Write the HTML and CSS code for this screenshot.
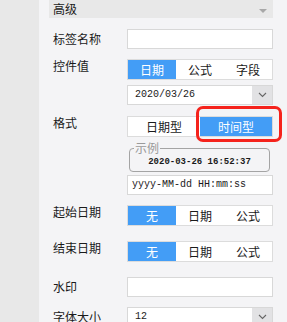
FILE: index.html
```html
<!DOCTYPE html>
<html lang="zh">
<head>
    <meta charset="UTF-8">
    <meta name="viewport" content="width=device-width, initial-scale=1.0">
    <title>控件属性</title>
    <link rel="stylesheet" href="styles.css">
</head>
<body>
    <div class="side"></div>

    <div class="panel">
        <div class="section-head">
            <span>高级</span>
            <span class="caret"></span>
        </div>

        <div class="field gap-11">
            <label class="field-label">标签名称</label>
            <div class="control">
                <input class="text-input" type="text">
            </div>
        </div>

        <div class="field gap-10">
            <label class="field-label top">控件值</label>
            <div class="control">
                <div class="segment">
                    <span class="seg active">日期</span>
                    <span class="seg">公式</span>
                    <span class="seg">字段</span>
                </div>
                <div class="select date-select">
                    <span class="select-value">2020/03/26</span>
                    <span class="select-btn"><svg width="9" height="6" viewBox="0 0 9 6"><path d="M1 1 L4.5 4.5 L8 1" fill="none" stroke="#666" stroke-width="1.1"/></svg></span>
                </div>
            </div>
        </div>

        <div class="field gap-11">
            <label class="field-label top">格式</label>
            <div class="control">
                <div class="segment">
                    <span class="seg">日期型</span>
                    <span class="seg active">时间型<span class="highlight"></span></span>
                </div>
                <fieldset class="sample">
                    <legend>示例</legend>
                    <div class="sample-text">2020-03-26 16:52:37</div>
                </fieldset>
                <div class="format-input">yyyy-MM-dd HH:mm:ss</div>
            </div>
        </div>

        <div class="field gap-10">
            <label class="field-label top">起始日期</label>
            <div class="control">
                <div class="segment">
                    <span class="seg active">无</span>
                    <span class="seg">日期</span>
                    <span class="seg">公式</span>
                </div>
            </div>
        </div>

        <div class="field gap-15">
            <label class="field-label top">结束日期</label>
            <div class="control">
                <div class="segment">
                    <span class="seg active">无</span>
                    <span class="seg">日期</span>
                    <span class="seg">公式</span>
                </div>
            </div>
        </div>

        <div class="field gap-15">
            <label class="field-label">水印</label>
            <div class="control">
                <input class="text-input" type="text">
            </div>
        </div>

        <div class="field gap-10">
            <label class="field-label">字体大小</label>
            <div class="control">
                <div class="select">
                    <span class="select-value">12</span>
                    <span class="select-btn"><svg width="9" height="6" viewBox="0 0 9 6"><path d="M1 1 L4.5 4.5 L8 1" fill="none" stroke="#666" stroke-width="1.1"/></svg></span>
                </div>
            </div>
        </div>
    </div>
</body>
</html>
```

FILE: styles.css
```css
body {
    margin: 0;
    height: 322px;
    overflow: hidden;
    display: flex;
    font-family: "Noto Sans CJK SC", "DejaVu Sans", sans-serif;
    font-size: 12px;
    color: #1a1a1a;
}

.side {
    width: 39px;
    background-color: #e8e8e8;
}

.panel {
    flex: 1;
    background-color: #f4f4f6;
    padding: 0 14px 0 10px;
}

.section-head {
    height: 18px;
    background-color: #e8e8e8;
    display: flex;
    align-items: center;
    justify-content: space-between;
    padding: 0 6px 0 4px;
    line-height: 18px;
}

.caret {
    width: 0;
    height: 0;
    border-left: 4px solid transparent;
    border-right: 4px solid transparent;
    border-top: 4px solid #a8a8a8;
    margin-top: 3px;
}

.field {
    display: flex;
    align-items: flex-start;
}

.gap-10 { margin-top: 10px; }
.gap-11 { margin-top: 11px; }
.gap-15 { margin-top: 15px; }

.field-label {
    width: 74px;
    padding-left: 4px;
    line-height: 20px;
    flex-shrink: 0;
}

.field-label.top {
    line-height: 14px;
}

.control {
    flex: 1;
    display: flex;
    flex-direction: column;
}

.text-input {
    box-sizing: border-box;
    width: 100%;
    height: 20px;
    margin: 0;
    border: 1px solid #d8d8d8;
    background-color: #ffffff;
    outline: none;
}

.segment {
    display: flex;
    height: 21px;
    box-sizing: border-box;
    border: 1px solid #dcdcdc;
    background-color: #ffffff;
}

.seg {
    flex: 1;
    position: relative;
    text-align: center;
    line-height: 19px;
    font-size: 12px;
}

.seg.active {
    background-color: #439df6;
    color: #ffffff;
}

.highlight {
    position: absolute;
    left: -4px;
    top: -11px;
    width: 80px;
    height: 30px;
    border: 3px solid #f5231c;
    border-radius: 7px;
}

.select {
    display: flex;
    height: 20px;
    box-sizing: border-box;
    border: 1px solid #d8d8d8;
    background-color: #ffffff;
}

.date-select {
    margin-top: 5px;
}

.select-value {
    flex: 1;
    padding-left: 7px;
    font-family: "Liberation Mono", monospace;
    font-size: 10px;
    line-height: 18px;
}

.select-btn {
    width: 20px;
    background-color: #e2e2e4;
    display: flex;
    align-items: center;
    justify-content: center;
}

.sample {
    margin: 6px 3px 0 2px;
    padding: 0;
    height: 27px;
    border: 1px solid #a4a4a4;
    border-radius: 4px;
}

.sample legend {
    color: #9a9a9a;
    padding: 0 1px;
    margin-left: 4px;
    line-height: 10px;
}

.sample-text {
    text-align: center;
    font-family: "Liberation Mono", monospace;
    font-size: 9px;
    font-weight: bold;
    line-height: 18px;
}

.format-input {
    margin-top: 3px;
    height: 20px;
    box-sizing: border-box;
    border: 1px solid #d8d8d8;
    background-color: #ffffff;
    padding-left: 4px;
    font-family: "Liberation Mono", monospace;
    font-size: 10px;
    line-height: 18px;
}
```
